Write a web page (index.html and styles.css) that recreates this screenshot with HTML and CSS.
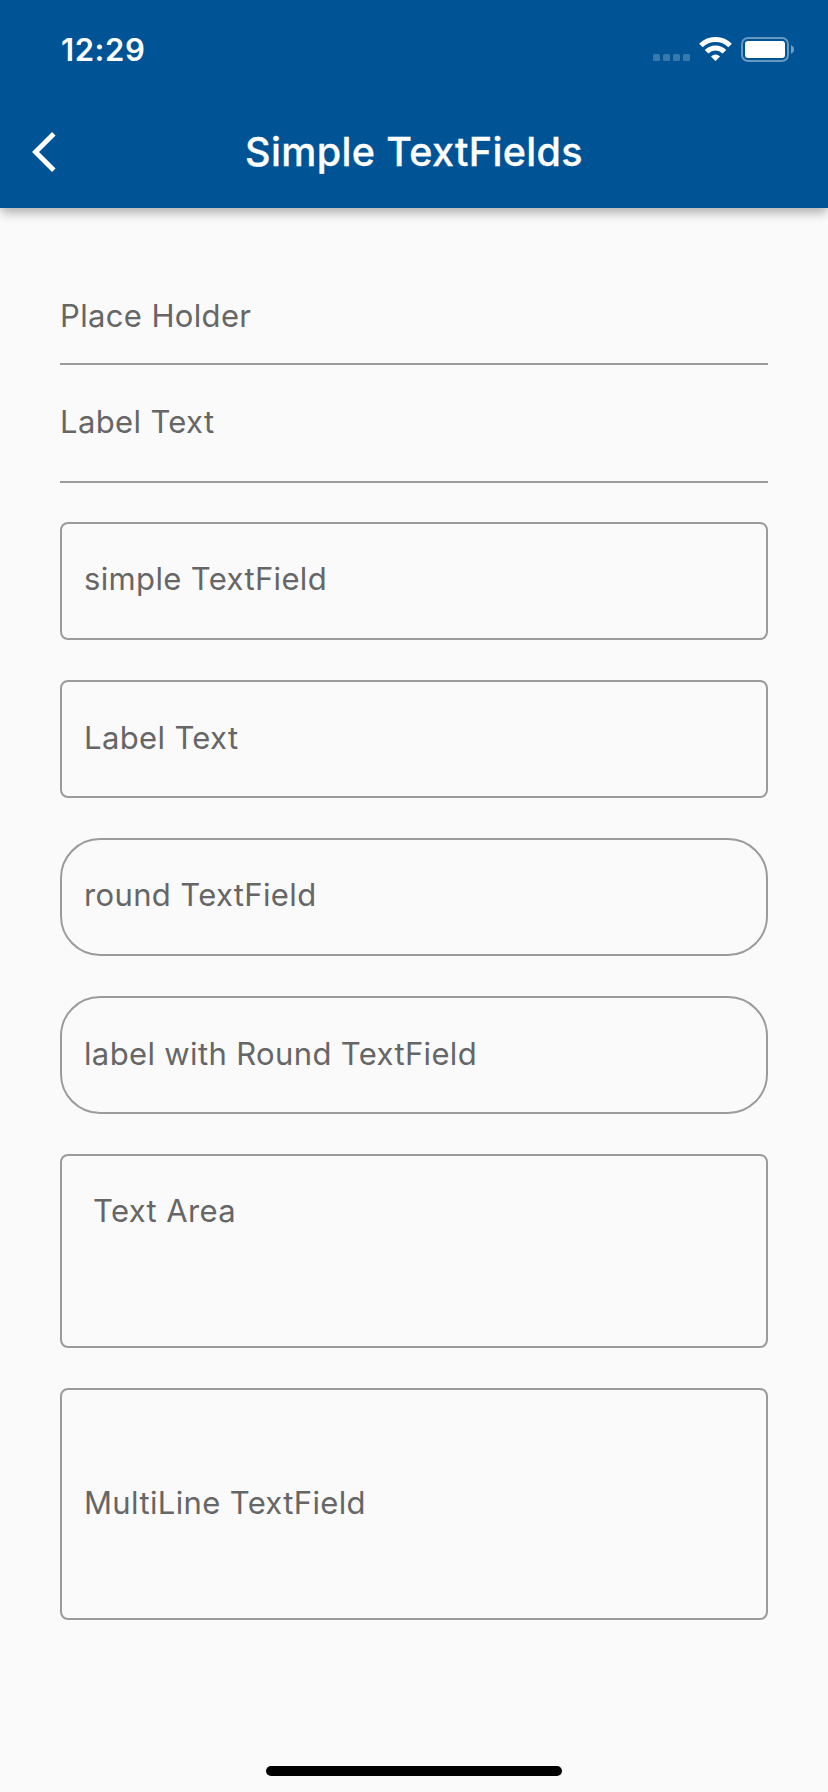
FILE: index.html
```html
<!DOCTYPE html>
<html lang="en">
<head>
<meta charset="utf-8">
<title>Simple TextFields</title>
<link rel="stylesheet" href="styles.css">
</head>
<body>
<div class="screen">
  <header class="header">
    <div class="status">
      <span class="time">12:29</span>
      <svg class="status-icons" width="142" height="26" viewBox="0 0 142 26">
        <g fill="#fff" fill-opacity=".22">
          <rect x="0" y="17" width="7" height="7" rx="1.5"/>
          <rect x="10" y="17" width="7" height="7" rx="1.5"/>
          <rect x="20" y="17" width="7" height="7" rx="1.5"/>
          <rect x="30" y="17" width="7" height="7" rx="1.5"/>
        </g>
        <path d="M47.9 8.6A20.5 20.5 0 0 1 77.1 8.6" fill="none" stroke="#fff" stroke-width="5"/>
        <path d="M53.6 14.7A12.3 12.3 0 0 1 71.4 14.7" fill="none" stroke="#fff" stroke-width="5"/>
        <path d="M58 19.4Q62.500 15.6 67 19.4L63.100 23.500Q62.500 24.100 61.900 23.500Z" fill="#fff"/>
        <rect x="89" y="1" width="46" height="23" rx="6" fill="none" stroke="#fff" stroke-opacity=".4" stroke-width="2"/>
        <rect x="92" y="4" width="40" height="17" rx="3" fill="#fff"/>
        <path d="M138 8.200Q141 9.400 141 12.500T138 16.800Z" fill="#fff" fill-opacity=".45"/>
      </svg>
    </div>
    <div class="appbar">
      <svg class="back" width="24" height="40" viewBox="0 0 24 40"><path d="M21.800 1.800L3.500 20L21.800 38.200" fill="none" stroke="#fff" stroke-width="5"/></svg>
      <h1 class="title">Simple TextFields</h1>
    </div>
  </header>
  <main class="form">
    <div class="field line first"><span class="hint">Place Holder</span></div>
    <div class="field line second"><span class="hint">Label Text</span></div>
    <div class="field box"><span class="hint">simple TextField</span></div>
    <div class="field box lower"><span class="hint">Label Text</span></div>
    <div class="field box round"><span class="hint">round TextField</span></div>
    <div class="field box round lower"><span class="hint">label with Round TextField</span></div>
    <div class="field box area"><span class="hint">Text Area</span></div>
    <div class="field box multi"><span class="hint">MultiLine TextField</span></div>
  </main>
  <div class="home"></div>
</div>
</body>
</html>
```
FILE: styles.css
```css
* { box-sizing: border-box; }
body { margin: 0; background: #fafafa; font-family: Inter, "Liberation Sans", sans-serif; }
.screen { width: 828px; height: 1792px; display: flex; flex-direction: column; align-items: center; overflow: hidden; }
.header { width: 828px; height: 208px; flex: none; background: #005496; color: #fff; box-shadow: 0 8px 10px -2px rgba(0,0,0,.14), 0 4px 8px rgba(0,0,0,.12), 0 2px 14px rgba(0,0,0,.08); }
.status { height: 96px; padding: 30px 33px 0 61px; display: flex; justify-content: space-between; align-items: flex-start; }
.time { font-size: 31px; font-weight: 600; line-height: 40px; letter-spacing: .6px; }
.status-icons { margin-top: 7px; }
.appbar { height: 112px; display: grid; grid-template-columns: 100px 1fr 100px; align-items: center; }
.back { margin-left: 32px; }
.title { margin: 0; text-align: center; white-space: nowrap; font-size: 39.5px; font-weight: 500; line-height: 48px; letter-spacing: .35px; -webkit-text-stroke: .3px #fff; }
.form { width: 708px; padding-top: 52px; flex: none; }
.field { white-space: nowrap; }
.hint { font-size: 31px; font-weight: 400; line-height: 40px; color: #666; letter-spacing: .36px; display: inline-block; }
.line { border-bottom: 2px solid #9b9b9b; }
.first { height: 105px; padding-top: 36px; }
.second { height: 118px; padding-top: 37px; margin-bottom: 39px; }
.box { height: 118px; margin-bottom: 40px; padding: 35px 22px 0; border: 2px solid #9b9b9b; border-radius: 8px; }
.lower { padding-top: 36px; }
.round { border-radius: 40px; }
.area { height: 194px; padding-left: 31px; }
.multi { height: 232px; padding-top: 93px; margin-bottom: 0; }
.home { width: 296px; height: 10px; border-radius: 5px; background: #000; margin-top: auto; margin-bottom: 16px; }
```
